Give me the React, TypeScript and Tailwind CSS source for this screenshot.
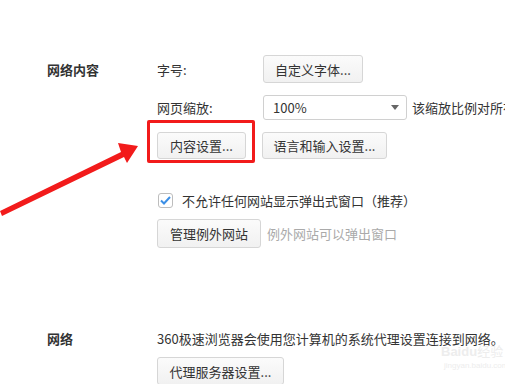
import React from "react";

function Btn({ w, h = "h-[28px]", children }: { w: string; h?: string; children: React.ReactNode }) {
  return (
    <div
      className={`${w} ${h} shrink-0 flex items-center justify-center rounded-[3px] border border-[#d6d6d6] bg-gradient-to-b from-[#fbfbfb] to-[#f1f1f1] text-[#333] whitespace-nowrap`}
    >
      {children}
    </div>
  );
}

export default function App() {
  return (
    <div className="relative w-[505px] h-[384px] overflow-hidden bg-white font-['Noto_Sans_CJK_SC','Noto_Sans',sans-serif] text-[13px] text-[#333] leading-none">
      <div className="pt-[55px] pl-[47px]">
        {/* 网络内容 */}
        <div className="flex">
          <div className="w-[110px] h-[28px] shrink-0 flex items-center font-bold">网络内容</div>
          <div className="flex flex-col">
            <div className="flex items-center h-[28px]">
              <span className="w-[106px] shrink-0">字号:</span>
              <Btn w="w-[100px]">自定义字体...</Btn>
            </div>
            <div className="flex items-center h-[25px] mt-[12px]">
              <span className="w-[106px] shrink-0">网页缩放:</span>
              <div className="w-[144px] h-[25px] shrink-0 flex items-center justify-between pl-[9px] pr-[7px] rounded-[3px] border border-[#d0d0d0] bg-white">
                <span>100%</span>
                <svg width="8" height="5" viewBox="0 0 8 5">
                  <path d="M0 0 L8 0 L4 5 Z" fill="#666" />
                </svg>
              </div>
              <span className="ml-[5px] whitespace-nowrap">该缩放比例对所有网页有效</span>
            </div>
            <div className="flex items-center mt-[12px]">
              <Btn w="w-[89px]" h="h-[27px]">内容设置...</Btn>
              <div className="ml-[16px]">
                <Btn w="w-[125px]" h="h-[27px]">语言和输入设置...</Btn>
              </div>
            </div>
            <div className="flex items-center h-[15px] mt-[34px] ml-[1px]">
              <div className="w-[15px] h-[15px] shrink-0 flex items-center justify-center rounded-[3px] border border-[#bdbdbd] bg-white">
                <svg width="11" height="9" viewBox="0 0 11 9">
                  <path d="M1 4.5 L4 7.5 L10 1" fill="none" stroke="#3c8fe6" strokeWidth="2" />
                </svg>
              </div>
              <span className="ml-[9px] whitespace-nowrap">不允许任何网站显示弹出式窗口（推荐）</span>
            </div>
            <div className="flex items-center mt-[11px]">
              <Btn w="w-[104px]" h="h-[29px]">管理例外网站</Btn>
              <span className="ml-[6px] text-[#aaa] whitespace-nowrap">例外网站可以弹出窗口</span>
            </div>
          </div>
        </div>

        {/* 网络 */}
        <div className="flex mt-[80px]">
          <div className="w-[110px] h-[20px] shrink-0 flex items-center font-bold">网络</div>
          <div className="flex flex-col">
            <div className="h-[20px] flex items-center whitespace-nowrap">
              360极速浏览器会使用您计算机的系统代理设置连接到网络。
            </div>
            <div className="mt-[9px]">
              <Btn w="w-[127px]">代理服务器设置...</Btn>
            </div>
          </div>
        </div>
      </div>

      {/* annotation box */}
      <div className="absolute left-[147px] top-[120px] w-[108px] h-[43px] border-[3px] border-[#f21b1b] rounded-[2px]" />

      {/* annotation arrow */}
      <svg className="absolute left-0 top-0" width="505" height="384" viewBox="0 0 505 384">
        <polygon
          points="0,211 121,152 118,143 138,146 127,163 124,157 2,216"
          fill="#f21b1b"
        />
      </svg>

      {/* watermark */}
      <div className="absolute left-[441px] top-[344px] flex flex-col items-start text-[#ededed] font-['Liberation_Sans',sans-serif] font-bold">
        <span className="text-[13px] whitespace-nowrap">Baidu<span className="font-['Noto_Sans_CJK_SC',sans-serif] font-normal">经验</span></span>
        <span className="text-[8px] mt-[4px] ml-[3px] font-normal whitespace-nowrap">jingyan.baidu.com</span>
      </div>
    </div>
  );
}
